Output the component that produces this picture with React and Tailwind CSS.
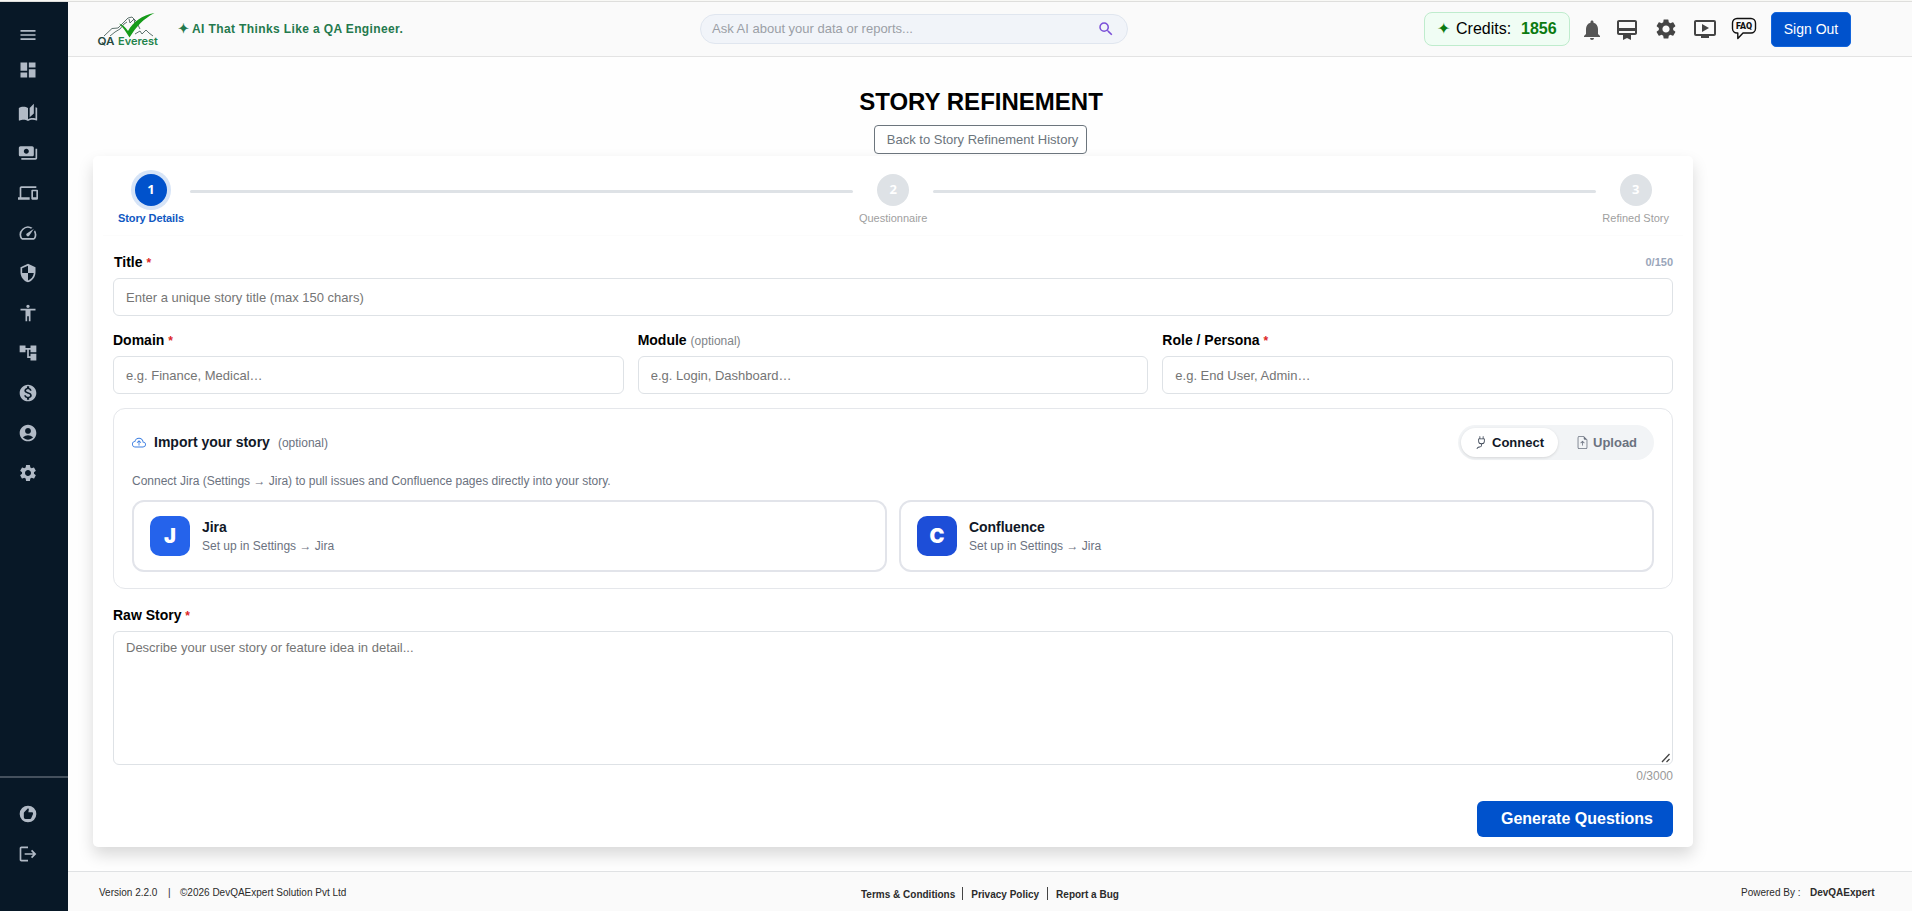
import React from "react";
import {
  MdMenu, MdDashboard, MdAutoStories, MdPayments, MdDevices, MdSpeed, MdSecurity,
  MdAccessibility, MdAccountTree, MdMonetizationOn, MdAccountCircle, MdSettings,
  MdRecommend, MdLogout, MdNotifications, MdCardMembership, MdOndemandVideo, MdSearch,
} from "react-icons/md";
import { BsCloudArrowUp, BsPlug, BsFileEarmarkArrowUp } from "react-icons/bs";

const navIcons = [
  MdAutoStories, MdPayments, MdDevices, MdSpeed, MdSecurity,
  MdAccessibility, MdAccountTree, MdMonetizationOn, MdAccountCircle, MdSettings,
];

function Sidebar() {
  return (
    <nav className="flex w-[68px] shrink-0 flex-col bg-[#081827] text-[#b1bac6]">
      <div className="mt-[13px] flex h-10 w-14 items-center justify-center"><MdMenu size={20} /></div>
      <div className="flex h-[30px] w-14 items-center justify-center"><MdDashboard size={20} /></div>
      <div className="mt-2 flex w-14 flex-col">
        {navIcons.map((Icon, i) => (
          <div key={i} className="flex h-10 items-center justify-center"><Icon size={20} /></div>
        ))}
      </div>
      <div className="mt-auto h-[2px] bg-[#44505d]" />
      <div className="mb-[37px] mt-4 flex w-14 flex-col">
        <div className="flex h-10 items-center justify-center"><MdRecommend size={20} /></div>
        <div className="flex h-10 items-center justify-center"><MdLogout size={20} /></div>
      </div>
    </nav>
  );
}

function Logo() {
  return (
    <svg width="66" height="38" viewBox="0 0 66 38" className="shrink-0">
      <g fill="none" stroke="#4b625c" strokeWidth="0.9">
        <path d="M9 26 L17 18.5 L23 18 L33 8 L37 7 L41 11 L45 19" />
        <path d="M15 26 L20 22 L25 19 L29 14 L32 12 M34 9 L35 13 L39 9 L40 14" />
        <path d="M40 24 L45 21 L47 24 L51 20 L54 23 L58 26" />
      </g>
      <path d="M24 13.5 C28 15 30 17 33 21 C38 12 47 5 59.500 3 C48 9 41 17 34.500 27.500 C31 22 28 17 24 13.500Z" fill="#169b1a" />
      <text x="2.500" y="34.500" fontFamily="Inter, sans-serif" fontWeight="600" fontSize="10.500" textLength="17" lengthAdjust="spacingAndGlyphs" fill="#24473f">QA</text>
      <text x="23" y="34.500" fontFamily="Inter, sans-serif" fontWeight="600" fontSize="10.500" textLength="40" lengthAdjust="spacingAndGlyphs" fill="#24834a">Everest</text>
    </svg>
  );
}

function FaqIcon() {
  return (
    <svg width="26" height="24" viewBox="0 0 26 24">
      <path d="M6 1.500H20A4.500 4.500 0 0 1 24.500 6V11.500A4.500 4.500 0 0 1 20 16H12L6.800 21.500V16H6A4.500 4.500 0 0 1 1.500 11.500V6A4.500 4.500 0 0 1 6 1.500Z" fill="none" stroke="#111" strokeWidth="1.400" strokeLinejoin="round" />
      <text x="5" y="12" fontFamily="Roboto, sans-serif" fontWeight="900" fontSize="8.800" textLength="16" lengthAdjust="spacingAndGlyphs" fill="#111">FAQ</text>
    </svg>
  );
}

function Header() {
  return (
    <header className="flex h-[55px] shrink-0 items-start border-b border-[#e3e3e3] bg-[#fafafa]">
      <div className="ml-[27px] mt-[8px] flex w-[66px]"><Logo /></div>
      <div className="ml-[17px] mt-[17px] flex w-[522px] items-center text-[12px] font-bold leading-[20px] tracking-[0.38px] text-[#24794d]">
        <span className="w-[14px] shrink-0 text-[13px] tracking-normal">✦</span>
        <span>AI That Thinks Like a QA Engineer.</span>
      </div>
      <div className="mt-[12px] flex h-[30px] w-[428px] items-center justify-between rounded-full border border-[#e0e6ef] bg-[#f1f4f9] pl-[11px] pr-[12px]">
        <span className="text-[13px] text-[#9b9fa6]">Ask AI about your data or reports...</span>
        <MdSearch size={18} className="text-[#7a4fd8]" />
      </div>
      <div className="ml-[296px] mt-[10px] flex h-[34px] w-[146px] items-center rounded-lg border border-[#bfeccd] bg-[#f0fdf4] pb-px pl-[12px] text-[16px]">
        <span className="w-[19px] text-[16px] text-[#0b7a10]">✦</span>
        <span className="w-[65px] text-black">Credits:</span>
        <span className="font-bold text-[#0b7a10]">1856</span>
      </div>
      <div className="mt-[15px] flex items-start text-[#444]">
        <MdNotifications size={24} className="ml-[10px] mt-px text-[#555]" />
        <MdCardMembership size={24} className="ml-[11px] mt-px" />
        <MdSettings size={24} className="ml-[15px]" />
        <MdOndemandVideo size={24} className="ml-[15px]" />
        <div className="ml-[14px]"><FaqIcon /></div>
      </div>
      <button className="ml-[14px] mt-[10px] h-[35px] w-[80px] rounded-[5px] border border-[#1265dc] bg-[#0052cc] text-[14px] text-white">Sign Out</button>
    </header>
  );
}

function Step({ n, label, active }) {
  return (
    <div className="flex shrink-0 flex-col items-center">
      <div
        className={
          active
            ? "flex size-8 items-center justify-center rounded-full bg-[#0052cc] font-['Open_Sans',sans-serif] text-[13px] font-bold text-white ring-4 ring-[#d6e4f7]"
            : "flex size-8 items-center justify-center rounded-full bg-[#dee2e6] font-['Open_Sans',sans-serif] text-[13px] font-bold text-white"
        }
      >
        {n}
      </div>
      <div className={active ? "mt-[4px] text-[11px] font-bold leading-[16px] tracking-[-0.1px] text-[#0f58c2]" : "mt-[4px] text-[11px] leading-[16px] text-[#a0a0a0]"}>
        {label}
      </div>
    </div>
  );
}

const StepLine = () => <div className="mx-[6px] mt-4 h-[3px] flex-1 rounded-full bg-[#dee2e6]" />;

function Label({ children, required, optional }) {
  return (
    <div className="h-[20px] text-[14px] font-bold leading-[20px] text-black">
      {children}{" "}
      {required && <span className="text-[12px] font-bold text-[#dc2626]">*</span>}
      {optional && <span className="text-[12px] font-normal text-[#808488]">(optional)</span>}
    </div>
  );
}

const Input = ({ placeholder }) => (
  <input
    className="block h-[38px] w-full rounded-[6px] border border-[#dee2e6] bg-white px-[12px] text-[13px] placeholder:text-[#757575]"
    placeholder={placeholder}
  />
);

function Source({ letter, name, color }) {
  return (
    <div className="flex h-[72px] flex-1 items-center rounded-[12px] border-2 border-[#e2e4ea] px-4">
      <div className={`flex size-10 items-center justify-center rounded-[10px] font-[Inter,sans-serif] text-[20px] font-black text-white ${color}`}>{letter}</div>
      <div className="ml-3">
        <div className="text-[14px] font-bold leading-[20px] tracking-[-0.05px] text-[#111827]">{name}</div>
        <div className="text-[12px] leading-[19px] text-[#6b7280]">Set up in Settings → Jira</div>
      </div>
    </div>
  );
}

function ImportPanel() {
  return (
    <section className="mt-[14px] h-[181px] rounded-[12px] border border-[#e5e7eb] px-[18px] pt-[16px]">
      <div className="flex h-[35px] items-center">
        <BsCloudArrowUp size={14} className="text-[#3b7de0]" />
        <span className="ml-2 text-[14px] font-bold text-[#111827]">Import your story</span>
        <span className="ml-[8px] mt-[1px] text-[12px] text-[#6b7280]">(optional)</span>
        <div className="ml-auto flex h-[35px] w-[196px] items-center rounded-full bg-[#f2f4f6] p-[3px]">
          <div className="flex h-[29px] w-[97px] items-center rounded-full bg-white pl-[14px] text-[13px] font-bold text-[#111827] shadow-[0_1px_3px_rgba(0,0,0,0.12)]">
            <BsPlug size={13} className="mr-[4px] text-[#374151]" />Connect
          </div>
          <div className="flex flex-1 items-center pl-[18px] text-[13px] font-bold text-[#6b7280]">
            <BsFileEarmarkArrowUp size={13} className="mr-[4px]" />Upload
          </div>
        </div>
      </div>
      <p className="mt-[11px] text-[12px] leading-[20px] text-[#6b7280]">
        Connect Jira (Settings → Jira) to pull issues and Confluence pages directly into your story.
      </p>
      <div className="mt-[9px] flex gap-3">
        <Source letter="J" name="Jira" color="bg-[#2563eb]" />
        <Source letter="C" name="Confluence" color="bg-[#1d4ed8]" />
      </div>
    </section>
  );
}

function RefinementCard() {
  return (
    <div className="mt-[2px] h-[691px] w-[1600px] rounded-[5px] bg-white shadow-[0_8px_16px_rgba(0,0,0,0.15)]">
      <div className="mx-[10px] flex h-[80px] border-b border-[#fcfcfc] pl-[15px] pr-[14px] pt-[18px]">
        <Step n="1" label="Story Details" active />
        <StepLine />
        <Step n="2" label="Questionnaire" />
        <StepLine />
        <Step n="3" label="Refined Story" />
      </div>
      <div className="px-5 pt-[16px]">
        <div className="flex h-[20px] items-center justify-between pl-px">
          <Label required>Title</Label>
          <span className="text-[11px] font-bold text-[#9aa6ba]">0/150</span>
        </div>
        <div className="mt-[6px]"><Input placeholder="Enter a unique story title (max 150 chars)" /></div>
        <div className="mt-[14px] grid grid-cols-3 gap-[14px]">
          <div><Label required>Domain</Label><div className="mt-[6px]"><Input placeholder="e.g. Finance, Medical…" /></div></div>
          <div><Label optional>Module</Label><div className="mt-[6px]"><Input placeholder="e.g. Login, Dashboard…" /></div></div>
          <div><Label required>Role / Persona</Label><div className="mt-[6px]"><Input placeholder="e.g. End User, Admin…" /></div></div>
        </div>
        <ImportPanel />
        <div className="mt-[16px]"><Label required>Raw Story</Label></div>
        <div className="relative mt-[6px]">
          <textarea
            className="block h-[134px] w-full resize-none rounded-[6px] border border-[#dee2e6] bg-white px-[12px] py-[6px] text-[13px] leading-[19px] placeholder:text-[#757575]"
            placeholder="Describe your user story or feature idea in detail..."
          />
          <svg width="10" height="10" viewBox="0 0 10 10" className="absolute bottom-[2px] right-[2px]">
            <path d="M1 9L8.500 1M5.500 9L8.500 6" stroke="#444" strokeWidth="1.300" fill="none" />
          </svg>
        </div>
        <div className="mt-[2px] text-right text-[12px] leading-[18px] text-[#999]">0/3000</div>
        <div className="mt-[16px] flex justify-end">
          <button className="h-9 w-[196px] rounded-[6px] bg-[#0052cc] pl-1 text-[16px] font-bold text-white">Generate Questions</button>
        </div>
      </div>
    </div>
  );
}

function Footer() {
  return (
    <footer className="flex h-10 shrink-0 border-t border-[#e0e2e4] bg-[#fafafa] text-[10px] leading-[14px] text-[#2b2b2b]">
      <div className="flex w-[793px] pl-[31px] pt-[14px]">
        <span className="w-[69px]">Version 2.2.0</span>
        <span className="w-[12px]">|</span>
        <span>©2026 DevQAExpert Solution Pvt Ltd</span>
      </div>
      <div className="flex w-[880px] items-start pt-[14px] font-bold">
        <span className="mt-[2px]">Terms &amp; Conditions</span>
        <span className="ml-[7px] mr-2 mt-px h-[13px] w-px bg-[#444]" />
        <span className="mt-[2px]">Privacy Policy</span>
        <span className="mx-2 mt-px h-[13px] w-px bg-[#444]" />
        <span className="mt-[2px]">Report a Bug</span>
      </div>
      <div className="flex pt-[14px]">
        <span className="w-[69px]">Powered By :</span>
        <span className="font-bold">DevQAExpert</span>
      </div>
    </footer>
  );
}

export default function App() {
  return (
    <div className="flex h-[911px] w-[1912px] flex-col overflow-hidden bg-white font-['Liberation_Sans',Arial,sans-serif]">
      <div className="h-[2px] shrink-0 border-b border-[#dededc] bg-[#f8f8f5]" />
      <div className="flex min-h-0 flex-1">
        <Sidebar />
        <div className="flex min-w-0 flex-1 flex-col">
          <Header />
          <main className="flex-1 overflow-hidden bg-[#fefefe] pl-[25px] pr-[43px]">
            <div className="flex flex-col items-center pt-[30px]">
              <h1 className="text-[24px] font-bold leading-[30px] text-black">STORY REFINEMENT</h1>
              <button className="mr-[2px] mt-[8px] h-[29px] w-[213px] rounded-[4px] border border-[#6c757d] bg-white pl-[5px] text-[13px] text-[#6c757d]">
                Back to Story Refinement History
              </button>
            </div>
            <RefinementCard />
          </main>
          <Footer />
        </div>
      </div>
    </div>
  );
}
